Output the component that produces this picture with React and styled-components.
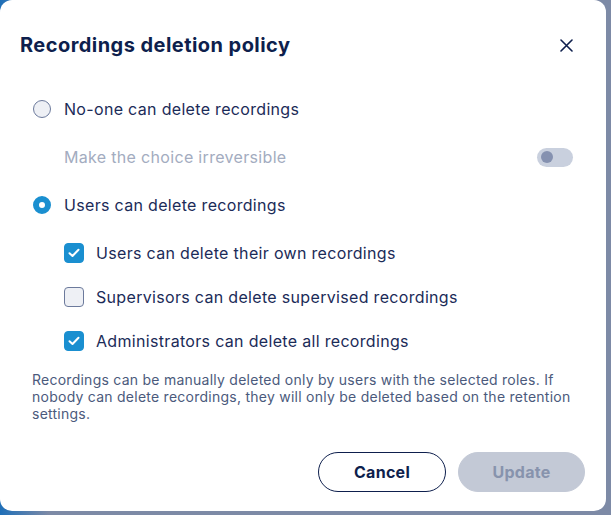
import React, { useState } from 'react'
import styled, { createGlobalStyle } from 'styled-components'

const GlobalStyle = createGlobalStyle`
    html, body {
        margin: 0;
        padding: 0;
    }
    body {
        width: 611px;
        height: 515px;
        overflow: hidden;
        background: linear-gradient(90deg, #1f6fb8 0%, #7d8aa6 8%, #7d8aa6 100%);
        font-family: Inter, "Noto Sans", sans-serif;
    }
`

const Dialog = styled.div`
    width: 606px;
    height: 511px;
    box-sizing: border-box;
    background: #fff;
    border-radius: 12px;
    display: flex;
    flex-direction: column;
`
const Header = styled.div`
    display: flex;
    align-items: center;
    justify-content: space-between;
    padding: 33px 33px 0 20px;
    height: 24px;
    box-sizing: content-box;
`
const Title = styled.h2`
    margin: 0;
    font-size: 20px;
    line-height: 24px;
    font-weight: 700;
    letter-spacing: 0.45px;
    color: #0e1f4d;
`
const CloseButton = styled.button`
    border: 0;
    background: none;
    padding: 0;
    width: 14px;
    height: 14px;
    display: flex;
    align-items: center;
    justify-content: center;
    cursor: pointer;
`
const Body = styled.div`
    padding: 40px 33px 0 32px;
    display: flex;
    flex-direction: column;
`
const Row = styled.label`
    display: flex;
    align-items: center;
    height: 24px;
    gap: 12px;
    margin-top: ${p => p.top || 0}px;
    padding-left: ${p => p.indent || 0}px;
    font-size: 16px;
    letter-spacing: 0.32px;
    color: ${p => p.muted ? '#a3acc0' : '#1b2b58'};
    cursor: pointer;
`
const Grow = styled.span`
    flex: 1;
`
const Radio = styled.span`
    width: 18px;
    height: 18px;
    margin: 0 1px;
    box-sizing: border-box;
    border-radius: 50%;
    flex-shrink: 0;
    border: ${p => p.checked ? '6px solid #1a8fd0' : '1px solid #6c7a9c'};
    background: ${p => p.checked ? '#fff' : '#eef0f5'};
`
const Check = styled.span`
    width: 20px;
    height: 20px;
    box-sizing: border-box;
    border-radius: 4px;
    flex-shrink: 0;
    display: flex;
    align-items: center;
    justify-content: center;
    border: 1px solid ${p => p.checked ? '#1a8fd0' : '#6c7a9c'};
    background: ${p => p.checked ? '#1a8fd0' : '#eef0f5'};
`
const Toggle = styled.span`
    width: 36px;
    height: 19px;
    border-radius: 10px;
    background: #c9d0de;
    display: flex;
    align-items: center;
    padding-left: 4px;
    box-sizing: border-box;
    &::after {
        content: '';
        width: 12px;
        height: 12px;
        border-radius: 50%;
        background: #8591b0;
    }
`
const Checks = styled.div`
    display: flex;
    flex-direction: column;
    gap: 20px;
    margin-top: 24px;
`
const Help = styled.p`
    margin: 18px 0 0;
    font-size: 14px;
    line-height: 17px;
    letter-spacing: 0.25px;
    color: #4b5a7c;
`
const Footer = styled.div`
    display: flex;
    justify-content: flex-end;
    gap: 12px;
    padding: 30px 21px 0 0;
`
const Button = styled.button`
    height: 40px;
    width: ${p => p.w}px;
    border-radius: 20px;
    font-family: inherit;
    font-size: 16px;
    font-weight: 700;
    letter-spacing: 0.3px;
    border: 1px solid ${p => p.primary ? '#c3c9d6' : '#0e1f4d'};
    background: ${p => p.primary ? '#c3c9d6' : '#fff'};
    color: ${p => p.primary ? '#8793ad' : '#0e1f4d'};
`

const Tick = () => (
    <svg width="12" height="10" viewBox="0 0 12 10">
        <path d="M1.5 5.2 L4.5 8 L10.5 1.8" fill="none" stroke="#fff" strokeWidth="2" strokeLinecap="round" strokeLinejoin="round" />
    </svg>
)

export default function App() {
    const [mode, setMode] = useState('users')
    const [roles, setRoles] = useState({ own: true, sup: false, admin: true })
    const flip = k => setRoles(r => ({ ...r, [k]: !r[k] }))

    return (
        <>
            <GlobalStyle />
            <Dialog>
                <Header>
                    <Title>Recordings deletion policy</Title>
                    <CloseButton aria-label="Close">
                        <svg width="13" height="13" viewBox="0 0 13 13">
                            <path d="M1 1 L12 12 M12 1 L1 12" stroke="#0e1f4d" strokeWidth="1.6" strokeLinecap="round" />
                        </svg>
                    </CloseButton>
                </Header>
                <Body>
                    <Row onClick={() => setMode('none')}>
                        <Radio checked={mode === 'none'} />
                        No-one can delete recordings
                    </Row>
                    <Row top={24} indent={32} muted>
                        <Grow>Make the choice irreversible</Grow>
                        <Toggle />
                    </Row>
                    <Row top={24} onClick={() => setMode('users')}>
                        <Radio checked={mode === 'users'} />
                        Users can delete recordings
                    </Row>
                    <Checks>
                        <Row indent={32} onClick={() => flip('own')}>
                            <Check checked={roles.own}>{roles.own && <Tick />}</Check>
                            Users can delete their own recordings
                        </Row>
                        <Row indent={32} onClick={() => flip('sup')}>
                            <Check checked={roles.sup}>{roles.sup && <Tick />}</Check>
                            Supervisors can delete supervised recordings
                        </Row>
                        <Row indent={32} onClick={() => flip('admin')}>
                            <Check checked={roles.admin}>{roles.admin && <Tick />}</Check>
                            Administrators can delete all recordings
                        </Row>
                    </Checks>
                    <Help>
                        Recordings can be manually deleted only by users with the selected roles. If nobody can delete recordings, they will only be deleted based on the retention settings.
                    </Help>
                </Body>
                <Footer>
                    <Button w={128}>Cancel</Button>
                    <Button w={127} primary>Update</Button>
                </Footer>
            </Dialog>
        </>
    )
}
